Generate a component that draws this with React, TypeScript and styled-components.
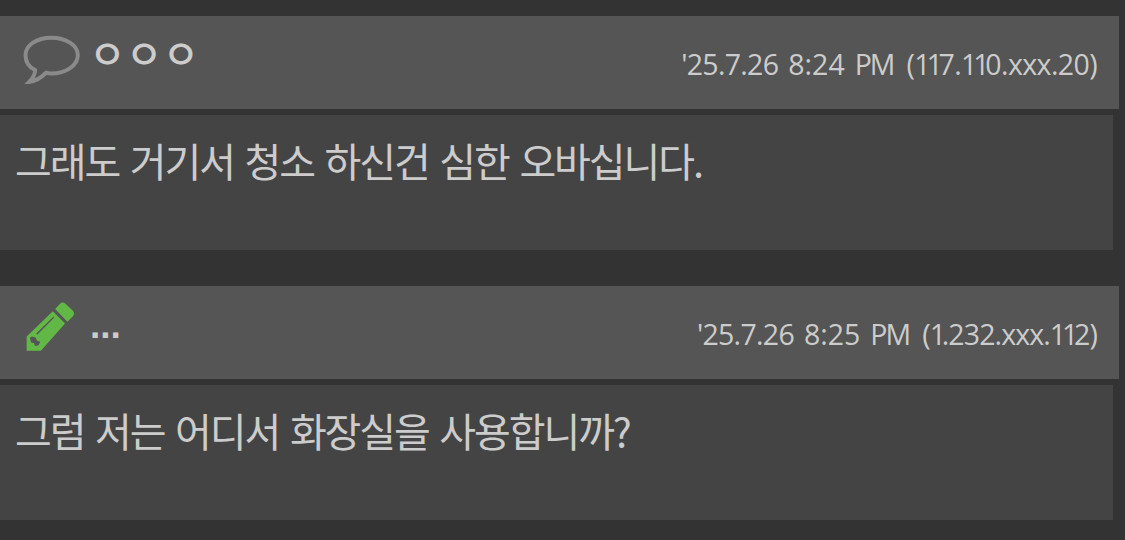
import React from 'react';
import styled, { createGlobalStyle } from 'styled-components';

interface CommentData {
  id: number;
  kind: 'comment' | 'author';
  name: string;
  date: string;
  time: string;
  ip: string;
  text: string;
}

const comments: CommentData[] = [
  {
    id: 1,
    kind: 'comment',
    name: 'ㅇㅇㅇ',
    date: "'25.7.26",
    time: '8:24',
    ip: '(117.110.xxx.20)',
    text: '그래도 거기서 청소 하신건 심한 오바십니다.',
  },
  {
    id: 2,
    kind: 'author',
    name: '...',
    date: "'25.7.26",
    time: '8:25',
    ip: '(1.232.xxx.112)',
    text: '그럼 저는 어디서 화장실을 사용합니까?',
  },
];

const BubbleIcon = () => (
  <BubbleSvg viewBox="68 76 171 148">
    <path d="M104 182C86 173 75 156 75 137C75 107 109 84 153 84S233 107 233 137S198 192 153 192Q145 192 137 190C121 206 105 216 86 218C99 205 104 197 104 182Z" />
  </BubbleSvg>
);

const PencilIcon = () => (
  <PencilSvg viewBox="80 66 146 148">
    <path d="M167 87L181 72Q189 64 198 71L220 92Q228 101 220 110L204 126Z" />
    <path
      fillRule="evenodd"
      d="M160 94L197 131L124 213H81V170ZM164 109L160 112L110 161L113 165L163 114ZM96 170L91 175L94 188L103 190L106 199L117 197L122 186L112 182L108 173Z"
    />
  </PencilSvg>
);

const App = () => {
  return (
    <>
      <GlobalStyle />
      <List>
        {comments.map((comment) => (
          <Comment key={comment.id}>
            <Header>
              {comment.kind === 'author' ? <PencilIcon /> : <BubbleIcon />}
              {comment.kind === 'author' ? (
                <DotName>{comment.name}</DotName>
              ) : (
                <Name>{comment.name}</Name>
              )}
              <Meta>
                <Stamp>{comment.date}</Stamp>
                <Time>{comment.time}</Time>
                <Meridiem>PM</Meridiem>
                <Ip $tight={comment.kind === 'author'}>
                  {comment.ip
                    .split('')
                    .map((char, i) =>
                      char === '1' ? <One key={i}>{char}</One> : char
                    )}
                </Ip>
              </Meta>
            </Header>
            <Body>{comment.text}</Body>
          </Comment>
        ))}
      </List>
    </>
  );
};

export default App;

const GlobalStyle = createGlobalStyle`
  * {
    box-sizing: border-box;
  }
  body {
    margin: 0;
    background-color: #333;
    color: #ccc;
    font-family: 'Noto Sans CJK KR', sans-serif;
    overflow: hidden;
  }
`;

const List = styled.div`
  display: flex;
  flex-direction: column;
  gap: 36px;
  height: 540px;
  padding: 16px 6px 0 0;
`;

const Comment = styled.div`
  display: flex;
  flex-direction: column;
  gap: 6px;
`;

const Header = styled.div`
  display: flex;
  height: 93px;
  padding-right: 22px;
  background-color: #555;
`;

const BubbleSvg = styled.svg`
  flex: none;
  width: 57px;
  height: 49px;
  margin: 19px 9px 0 23px;
  fill: none;
  stroke: #8a8a8a;
  stroke-width: 12;
`;

const PencilSvg = styled.svg`
  flex: none;
  width: 49px;
  height: 49px;
  margin: 16px 14px 0 26px;
  fill: #62b846;
`;

const Name = styled.div`
  padding-top: 6px;
  font-size: 40px;
  font-weight: 500;
  line-height: 60px;
`;

const DotName = styled.div`
  padding: 10px 0 0 1px;
  font-family: 'Liberation Sans', sans-serif;
  font-size: 37px;
  font-weight: 700;
  line-height: 60px;
`;

const Meta = styled.div`
  display: flex;
  margin-left: auto;
  font-family: 'Open Sans', sans-serif;
  font-size: 28.5px;
  letter-spacing: -0.7px;
  line-height: 97px;
  white-space: nowrap;
`;

const Stamp = styled.span`
  margin-right: 10px;
`;

const Time = styled(Stamp)`
  letter-spacing: 0;
`;

const Meridiem = styled.span`
  margin-right: 13px;
  letter-spacing: -2px;
`;

const Ip = styled.span<{ $tight: boolean }>`
  letter-spacing: ${(props) => (props.$tight ? '-0.9px' : '-0.6px')};
`;

const One = styled.span`
  letter-spacing: -4.2px;
`;

const Body = styled.div`
  width: 1113px;
  height: 135px;
  padding-left: 15px;
  background-color: #444;
  font-size: 40px;
  font-weight: 400;
  letter-spacing: -2.1px;
  line-height: 91px;
  word-spacing: 3.8px;
  white-space: nowrap;
`;
